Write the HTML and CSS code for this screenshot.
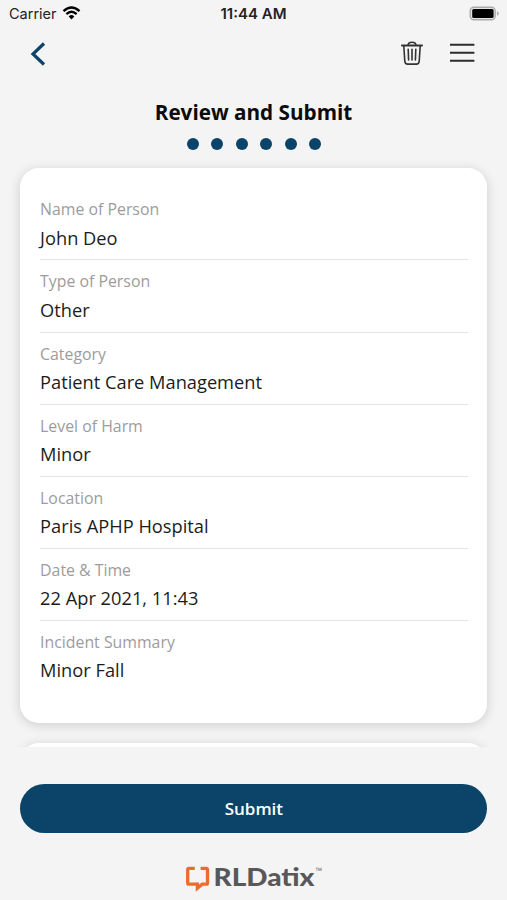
FILE: index.html
```html
<!DOCTYPE html>
<html lang="en">
<head>
<meta charset="utf-8">
<title>Review and Submit</title>
<link rel="stylesheet" href="styles.css">
</head>
<body>
<div class="screen">
  <div class="status">
    <div class="carrier"><span>Carrier</span>
      <svg class="wifi" width="19" height="14" viewBox="0 0 18 14" fill="none" stroke="#000" stroke-width="2.4"><path d="M1 5.1Q9-2.3 17 5.1"/><path d="M3.9 8.2Q9 3.5 14.1 8.2"/><path d="M6.2 10.4Q9 7.6 11.8 10.4L9 13.4Z" fill="#000" stroke="none"/></svg>
    </div>
    <div class="clock">11:44 AM</div>
    <svg class="battery" width="31" height="15" viewBox="0 0 31 15"><rect x="1.2" y="1.2" width="25" height="12.6" rx="3.8" fill="#e4e4e4" stroke="#aaa" stroke-width="1.4"/><rect x="3.2" y="3" width="21.4" height="9" rx="1.6" fill="#000"/><path d="M28 5Q31.6 7.4 28 9.8Z" fill="#aaa"/></svg>
  </div>
  <div class="nav">
    <svg class="back" width="16" height="24" viewBox="0 0 16 24" fill="none" stroke="#0b4468" stroke-width="3.2"><path d="M14 1.5 3 12 14 22.5"/></svg>
    <div class="actions">
      <svg width="22" height="25" viewBox="0 0 22 25" fill="none" stroke="#333" stroke-width="1.6" stroke-linecap="round"><path d="M.9 4.5H21.1" stroke-width="1.8"/><path d="M7 4.1Q7.4 1.3 11 1.3T15 4.1M2.8 5l1 15.2Q4 23.1 6.6 23.1h8.8q2.6 0 2.8-2.9L19.2 5M7.2 8.2l.4 10.8M11 8.2v10.8M14.8 8.2l-.4 10.8"/></svg>
      <svg class="menu" width="25" height="20" viewBox="0 0 25 20" stroke="#2c2c2c" stroke-width="2"><path d="M0 1.7h24.4M0 9.7h24.4M0 17.7h24.4"/></svg>
    </div>
  </div>
  <h1>Review and Submit</h1>
  <div class="dots"><i></i><i></i><i></i><i></i><i></i><i></i></div>
  <div class="scroll">
    <dl class="card">
      <div class="row"><dt>Name of Person</dt><dd>John Deo</dd></div>
      <div class="row"><dt>Type of Person</dt><dd>Other</dd></div>
      <div class="row"><dt>Category</dt><dd>Patient Care Management</dd></div>
      <div class="row"><dt>Level of Harm</dt><dd>Minor</dd></div>
      <div class="row"><dt>Location</dt><dd>Paris APHP Hospital</dd></div>
      <div class="row"><dt>Date &amp; Time</dt><dd>22 Apr 2021, 11:43</dd></div>
      <div class="row"><dt>Incident Summary</dt><dd>Minor Fall</dd></div>
    </dl>
    <div class="card next"></div>
  </div>
  <button class="submit">Submit</button>
  <div class="brand">
    <svg width="140" height="30" viewBox="0 0 140 30">
      <path d="M9.8 3.4H3.9Q2.7 3.4 2.7 4.6V18Q2.7 19.2 3.9 19.2H12.4V23.2L17.2 19.2H21.3Q22.5 19.2 22.5 18V4.6Q22.5 3.4 21.3 3.4H15.6" fill="none" stroke="#ee6b2d" stroke-width="3.3"/>
      <text class="wordmark" x="28.5" y="20.7" textLength="101" lengthAdjust="spacingAndGlyphs">RLDatix</text>
      <text class="tm" x="130.5" y="8.5">™</text>
    </svg>
  </div>
</div>
</body>
</html>
```
FILE: styles.css
```css
* { box-sizing: border-box; }
body { margin: 0; background: #f4f4f4; font-family: "Open Sans", sans-serif; }
.screen { width: 507px; height: 900px; overflow: hidden; display: flex; flex-direction: column; }
.status { height: 28px; flex: none; padding: 0 7px 0 9px; display: grid; grid-template-columns: 1fr auto 1fr; align-items: center; font: 14.5px/28px Inter, sans-serif; color: #222; }
.carrier { display: flex; align-items: center; gap: 5px; }
.wifi { margin-top: -2px; }
.clock { font-size: 15px; font-weight: 600; margin-left: -2px; }
.battery { justify-self: end; margin-top: -2px; }
.nav { height: 52px; flex: none; padding: 0 32px 0 30px; display: flex; align-items: center; justify-content: space-between; }
.back { display: block; }
.actions { display: flex; align-items: center; gap: 27px; margin-top: -2px; }
.actions svg { display: block; }
h1 { margin: 18px 0 0; font-size: 20.7px; line-height: 28px; font-weight: 700; text-align: center; color: #0c0c0c; }
.dots { height: 13px; margin-top: 12px; padding-left: 1px; display: flex; justify-content: center; gap: 12.1px; }
.dots i { width: 12.4px; height: 12.4px; border-radius: 50%; background: #0b4468; }
.scroll { height: 599px; flex: none; margin-top: -3px; padding: 20.4px 19.6px 0 20.4px; overflow: hidden; }
.card { margin: 0; height: 555px; padding: 20px 19px 0 19.7px; border-radius: 19px; background: #fff; box-shadow: 0 2px 12px rgba(0,0,0,.16); }
.next { margin-top: 20px; }
.row { height: 72.1px; padding-top: 9px; border-bottom: 1px solid #e5e5e5; }
.row:last-child { border: 0; }
dt { font-size: 15.85px; line-height: 24px; color: #9c9c9c; }
dd { margin: 3.4px 0 0; font-size: 18.25px; line-height: 26px; color: #1c1c1c; }
.submit { width: 467px; height: 49px; flex: none; margin: 37px 19.6px 0 20.4px; padding: 0 0 1px; border: 0; border-radius: 25px; background: #0b4468; color: #fff; font: 600 17px/47px "Open Sans", sans-serif; }
.brand { margin: 32px 0 0 185px; }
.brand svg { display: block; overflow: visible; }
.wordmark { font: 900 25px Lato, sans-serif; fill: #58585a; }
.tm { font: 9px "Open Sans", sans-serif; fill: #777; }
```
